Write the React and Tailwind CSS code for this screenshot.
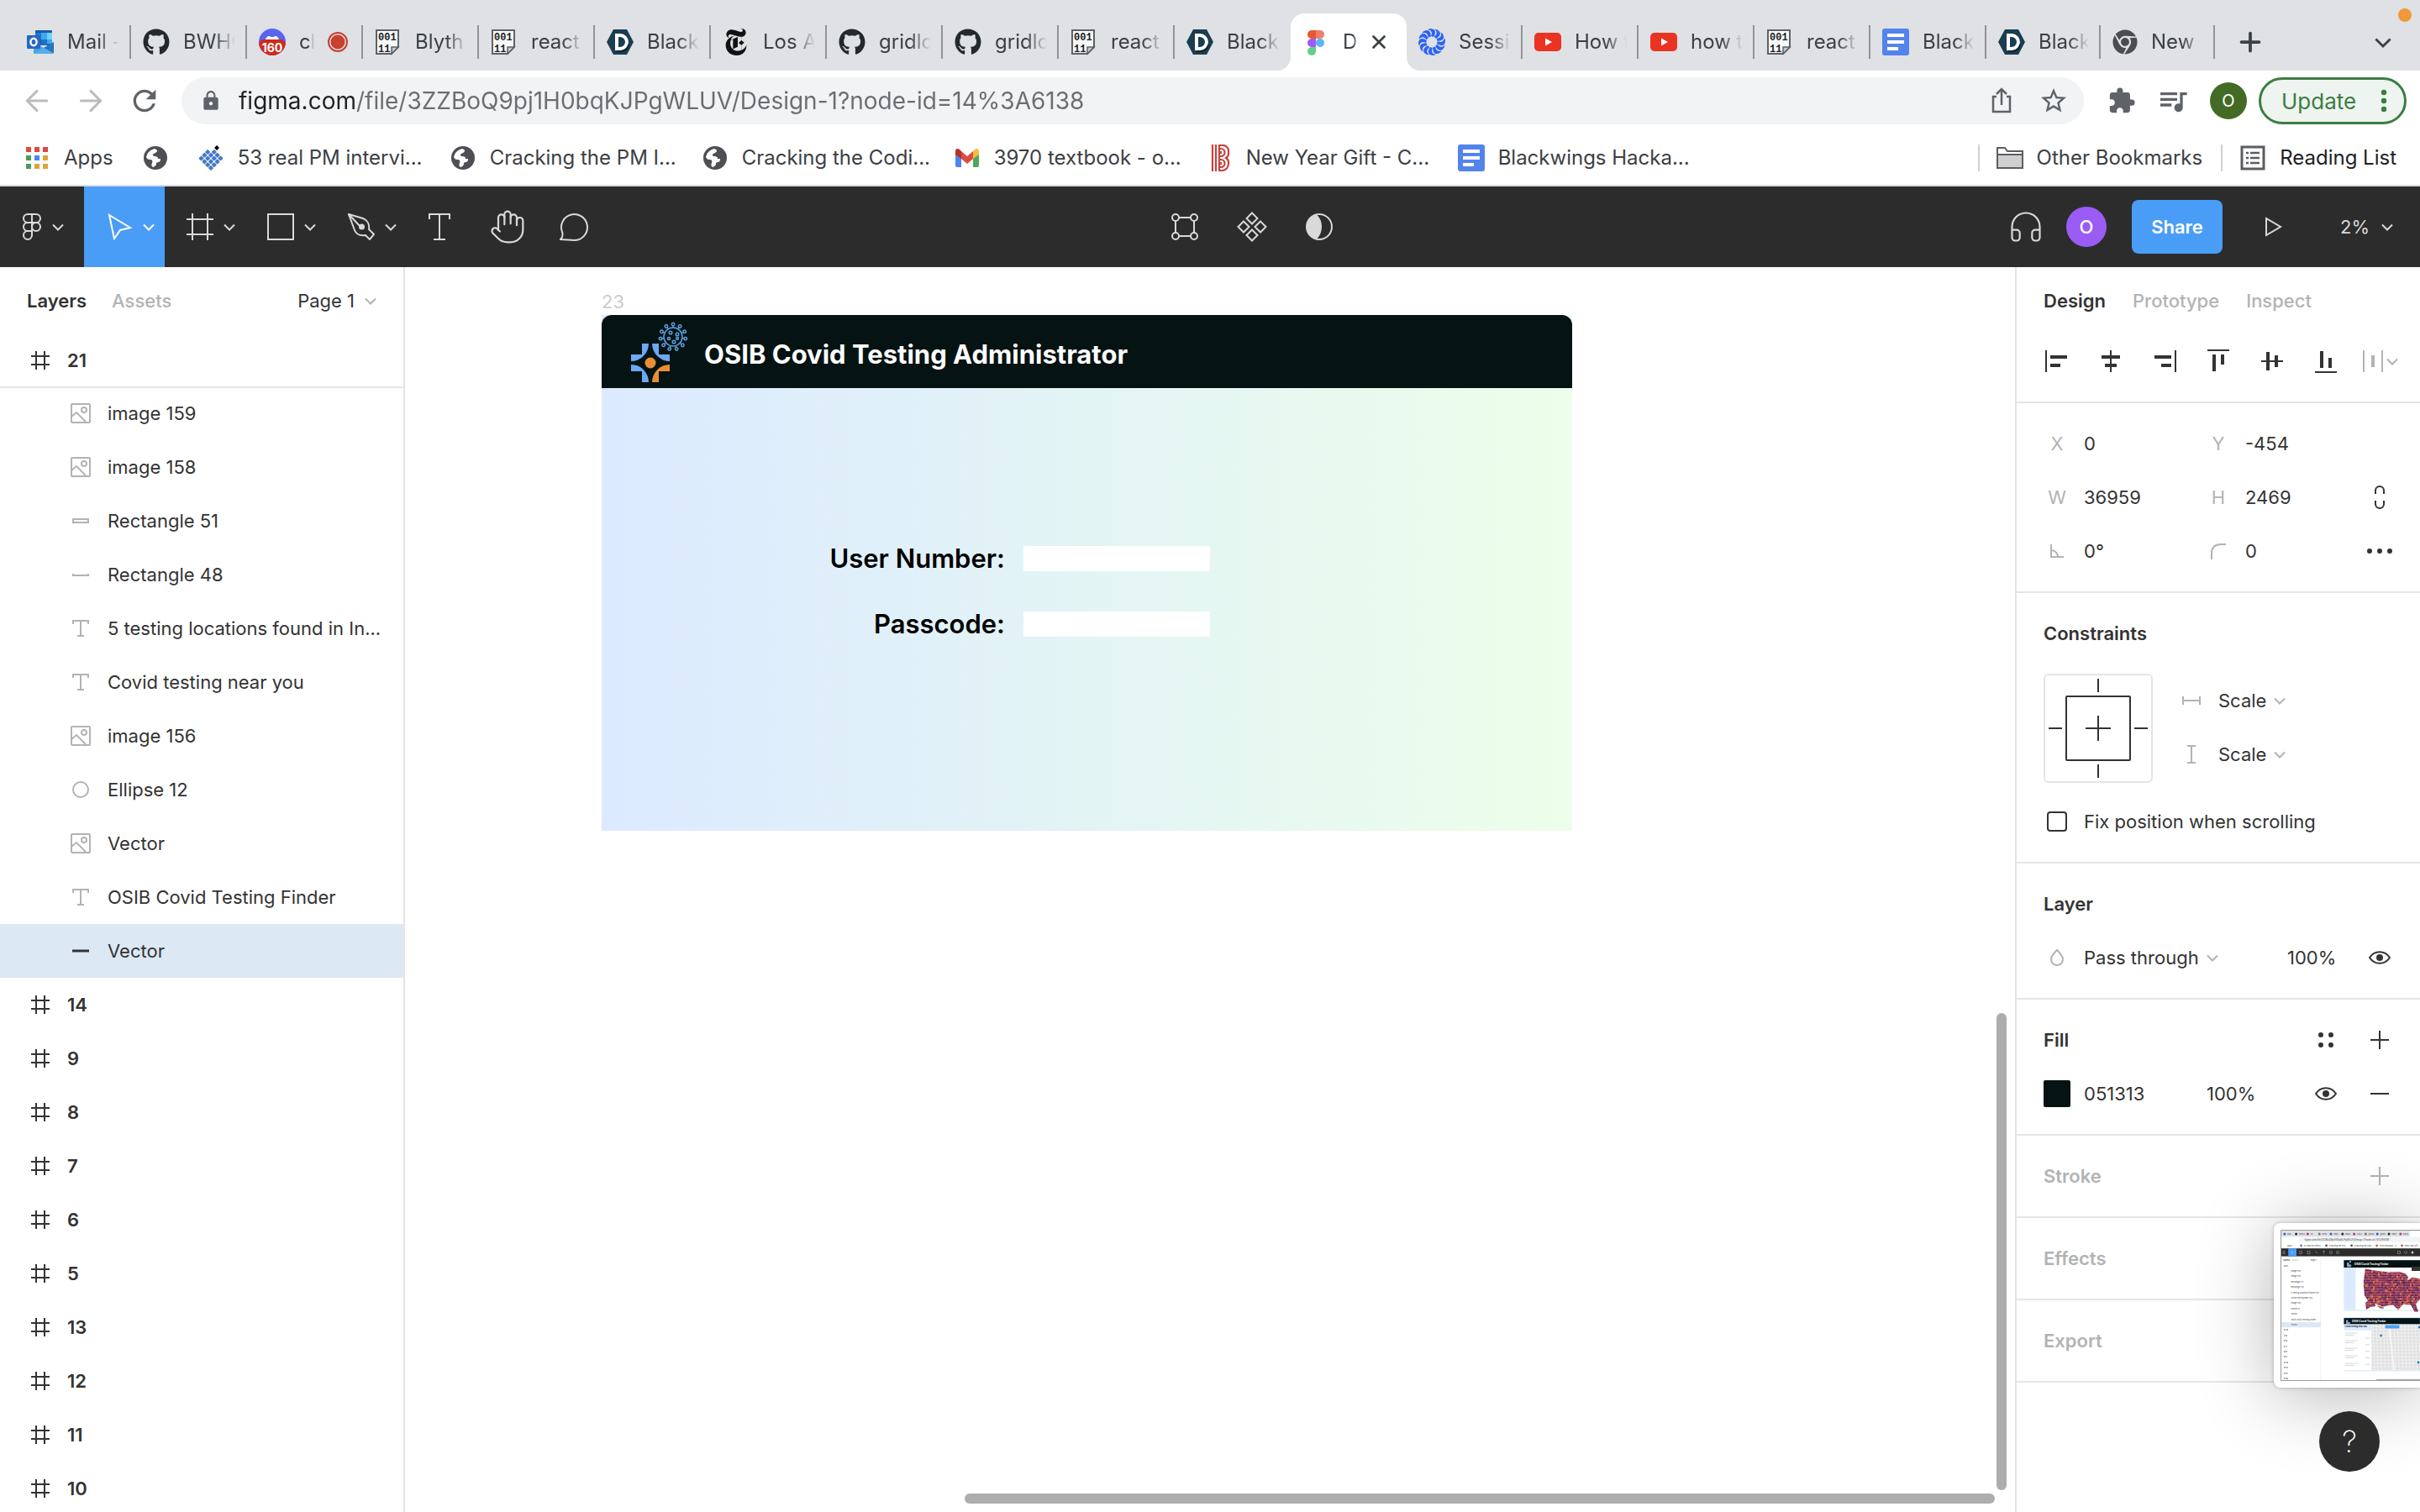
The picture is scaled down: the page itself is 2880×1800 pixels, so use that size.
import { useState } from 'react';
import { ArrowLeft, ArrowRight, Hand, Headphones, Plus, X } from 'lucide-react';
import { FaChrome, FaGithub } from 'react-icons/fa';
import { MdExtension, MdLock, MdQueueMusic, MdRefresh, MdStarBorder } from 'react-icons/md';
import { SiNewyorktimes } from 'react-icons/si';

const GRAY = '#b3b3b3';
const DARK = '#333333';

/* ---------- favicons ---------- */

function OutlookIcon() {
    return (
        <svg width="32" height="32" viewBox="0 0 32 32" className="shrink-0">
            <rect x="10" y="2" width="20" height="18" rx="1" fill="#1a5aa8" />
            <rect x="10" y="5" width="7" height="8" fill="#1e78d0" />
            <rect x="17" y="5" width="7" height="8" fill="#3ea9ee" />
            <rect x="24" y="5" width="6" height="8" fill="#6fd3fa" />
            <rect x="17" y="13" width="7" height="7" fill="#1f6fc4" />
            <rect x="24" y="13" width="6" height="5" fill="#3ea9ee" />
            <path d="M8 16l12 7 12-7v13a1 1 0 01-1 1H9a1 1 0 01-1-1z" fill="#4ba0e4" />
            <path d="M32 16v13L20 23z" fill="#2c73bd" />
            <path d="M8 30l12-7 12 7z" fill="#54aeee" />
            <rect x="0" y="8" width="16" height="16" rx="1" fill="#2567c4" />
            <ellipse cx="8" cy="16" rx="3.6" ry="4.2" fill="none" stroke="#fff" strokeWidth="2.4" />
        </svg>
    );
}

function DiscordIcon() {
    return (
        <span className="relative h-8 w-8 shrink-0 overflow-hidden rounded-full bg-[#5865f2]">
            <svg width="32" height="32" viewBox="0 0 32 32">
                <path d="M8 14c0-3 2-5 5-5l1 1h4l1-1c3 0 5 2 5 5z" fill="#fff" />
            </svg>
            <span className="absolute inset-x-0 bottom-0 flex h-[19px] items-center justify-center rounded-md bg-[#cf2a1d] text-sm font-bold text-white">160</span>
        </span>
    );
}

function BinaryIcon() {
    return (
        <svg width="32" height="32" viewBox="0 0 32 32" className="shrink-0">
            <path d="M2 2h26v20l-8 8H2z" fill="#f7f8f9" stroke="#5d6267" strokeWidth="2" />
            <path d="M20 30v-8h8z" fill="#c4c8cc" stroke="#5d6267" strokeWidth="1.5" />
            <text x="4" y="14" fontSize="12" fontWeight="700" fontFamily="Liberation Mono, monospace" fill="#222">001</text>
            <text x="4" y="28" fontSize="12" fontWeight="700" fontFamily="Liberation Mono, monospace" fill="#222">11</text>
        </svg>
    );
}

function HexDIcon() {
    return (
        <svg width="32" height="32" viewBox="0 0 32 32" className="shrink-0">
            <path d="M8 1h16l8 15-8 15H8L0 16z" fill="#1b3d51" />
            <path d="M12 8h4a8 8 0 010 16h-4z" fill="none" stroke="#fff" strokeWidth="4" />
            <path d="M12 27h6a10 10 0 008-8" fill="none" stroke="#0d1f2b" strokeWidth="1.5" />
        </svg>
    );
}

function FigmaIcon() {
    return (
        <svg width="32" height="32" viewBox="0 0 32 32" className="shrink-0">
            <path d="M11 2h5v10h-5a5 5 0 010-10z" fill="#e25a2d" />
            <path d="M16 2h5a5 5 0 010 10h-5z" fill="#ef7f6d" />
            <path d="M11 12h5v10h-5a5 5 0 010-10z" fill="#a259f7" />
            <circle cx="21" cy="17" r="5" fill="#57b6f9" />
            <path d="M11 22h5v5a5 5 0 11-5-5z" fill="#62d08b" />
        </svg>
    );
}

function PetalsIcon() {
    const petals = Array.from({ length: 12 }, (_, i) => i * 30);
    return (
        <svg width="32" height="32" viewBox="0 0 32 32" className="shrink-0">
            {petals.map(angle => (
                <path key={angle} d="M14 0c6 0 8 4 4 10l-3-1c2-4 1-7-4-8z" fill="#2d64f5" transform={`rotate(${angle} 16 16)`} />
            ))}
        </svg>
    );
}

function YoutubeIcon() {
    return (
        <svg width="32" height="32" viewBox="0 0 32 32" className="shrink-0">
            <rect x="0" y="5" width="32" height="22" rx="5" fill="#ea3323" />
            <path d="M13 11.500l8 4.500-8 4.500z" fill="#fff" />
        </svg>
    );
}

function DocsIcon() {
    return (
        <svg width="32" height="32" viewBox="0 0 32 32" className="shrink-0">
            <rect width="32" height="32" rx="3" fill="#5383ec" />
            <path d="M6 8h20M6 16h20M6 24h13" stroke="#fff" strokeWidth="4" />
        </svg>
    );
}

function GlobeIcon() {
    return (
        <svg width="32" height="32" viewBox="0 0 32 32" className="shrink-0">
            <circle cx="16" cy="16" r="14" fill="#4d4f54" />
            <path d="M5 15l1-3c2-4 5-6 9-7l2 1c2 1 1 3-1 4l-2 1c-2 1-1 3 1 3 3 0 4 1 4 3h3c0 3-1 4-3 4l-2 1c0 3-1 4-4 5-2-1-2-3-1-5 1-3 0-4-3-4-2 0-3-1-4-3z" fill="#fff" />
        </svg>
    );
}

function AppsIcon() {
    const colors = ['#dd4b3e', '#dd4b3e', '#dd4b3e', '#4f9a5b', '#4886ed', '#e2a336', '#4f9a5b', '#e2a336', '#e2a336'];
    return (
        <svg width="32" height="32" viewBox="0 0 32 32" className="shrink-0">
            {colors.map((c, i) => (
                <rect key={i} x={3 + (i % 3) * 10} y={3 + Math.floor(i / 3) * 10} width="6" height="6" fill={c} />
            ))}
        </svg>
    );
}

function DiamondGridIcon() {
    const cells = [];
    for (let r = 0; r < 4; r++) {
        for (let c = 0; c < 4; c++) {
            if (r === 0 && c === 0) continue;
            cells.push(<rect key={`${r}-${c}`} x={5 + c * 5.400} y={5 + r * 5.400} width="4.600" height="4.600" rx="1" fill="#4478c8" />);
        }
    }
    return (
        <svg width="32" height="32" viewBox="0 0 32 32" className="shrink-0">
            <g transform="rotate(45 16 16) translate(1 1)">{cells}</g>
            <path d="M23 1l3 3-3 3-3-3z" fill="#000" />
        </svg>
    );
}

function GmailIcon() {
    return (
        <svg width="32" height="32" viewBox="0 0 32 32" className="shrink-0">
            <path d="M2 11l7 5v11H4a2 2 0 01-2-2z" fill="#4a86ee" />
            <path d="M23 16l7-5v14a2 2 0 01-2 2h-5z" fill="#52a55b" />
            <path d="M9 8l7 6 7-6v9l-7 6-7-6z" fill="#db4c3f" />
            <path d="M2 8c0-3 3-4 5-2l2 2v9l-7-5z" fill="#b53127" />
            <path d="M30 8c0-3-3-4-5-2l-2 2v9l7-5z" fill="#f2be42" />
        </svg>
    );
}

function StripedBIcon() {
    return (
        <svg width="32" height="32" viewBox="0 0 32 32" className="shrink-0" fill="none" stroke="#c9423f" strokeWidth="2.2">
            <path d="M8 0v32M12 0v32M16 0v32" />
            <path d="M16 1h3a7 7 0 018 8 7 7 0 01-3 7 7 7 0 013 7 8 8 0 01-8 8h-3" />
            <path d="M16 5h2a4 4 0 010 9h-2M16 18h2a4 4 0 010 9h-2" />
            <path d="M17 9.500h2M17 22.500h2" strokeWidth="3" />
        </svg>
    );
}

/* ---------- shared bits ---------- */

function Chevron({ color = GRAY, size = 14 }) {
    return (
        <svg width={size} height={size} viewBox="0 0 14 14" className="pointer-events-none shrink-0">
            <path d="M1 4.500l6 6 6-6" fill="none" stroke={color} strokeWidth="2" />
        </svg>
    );
}

function Icon({ children, color = DARK, size = 32, box = 32, fill = 'none' }) {
    return (
        <svg width={size} height={size} viewBox={`0 0 ${box} ${box}`} fill={fill} stroke={color} strokeWidth="2" className="shrink-0">
            {children}
        </svg>
    );
}

/* ---------- browser ---------- */

const tabs = [
    { title: 'Mail -', icon: <OutlookIcon /> },
    { title: 'BWHC', icon: <FaGithub size={32} className="shrink-0 text-[#24292e]" /> },
    { title: 'ch', icon: <DiscordIcon />, recording: true },
    { title: 'Blyth', icon: <BinaryIcon /> },
    { title: 'react', icon: <BinaryIcon /> },
    { title: 'Black', icon: <HexDIcon /> },
    { title: 'Los A', icon: <SiNewyorktimes size={32} className="shrink-0 text-[#111]" /> },
    { title: 'gridlo', icon: <FaGithub size={32} className="shrink-0 text-[#24292e]" /> },
    { title: 'gridlo', icon: <FaGithub size={32} className="shrink-0 text-[#24292e]" /> },
    { title: 'react', icon: <BinaryIcon /> },
    { title: 'Black', icon: <HexDIcon />, last: true },
    { title: 'De', icon: <FigmaIcon />, active: true },
    { title: 'Sessi', icon: <PetalsIcon /> },
    { title: 'How t', icon: <YoutubeIcon /> },
    { title: 'how t', icon: <YoutubeIcon /> },
    { title: 'react', icon: <BinaryIcon /> },
    { title: 'Black', icon: <DocsIcon /> },
    { title: 'Black', icon: <HexDIcon />, narrow: true },
    { title: 'New', icon: <FaChrome size={30} className="shrink-0 text-[#4a4c50]" />, narrow: true },
];

function TabTitle({ children }) {
    return (
        <span className="min-w-0 flex-1 overflow-hidden text-left whitespace-nowrap [mask-image:linear-gradient(to_right,black_60%,transparent)]">
            {children}
        </span>
    );
}

function BrowserTab({ tab }) {
    if (tab.active) {
        return (
            <div className="relative flex h-[68px] w-[138px] shrink-0 items-center rounded-t-2xl bg-white pr-5 pl-[14px]">
                <svg width="16" height="16" className="absolute bottom-0 -left-4">
                    <path d="M16 0v16H0A16 16 0 0016 0z" fill="#fff" />
                </svg>
                <svg width="16" height="16" className="absolute -right-4 bottom-0">
                    <path d="M0 0v16h16A16 16 0 010 0z" fill="#fff" />
                </svg>
                {tab.icon}
                <button className="ml-4 flex w-5 overflow-hidden">
                    <TabTitle>{tab.title}</TabTitle>
                </button>
                <button className="ml-auto" aria-label="Close tab">
                    <X size={26} strokeWidth={2.5} />
                </button>
            </div>
        );
    }
    return (
        <div className={`flex h-[68px] shrink-0 items-center ${tab.narrow ? 'w-[136px]' : 'w-[138px]'}`}>
            <button className={`flex h-10 w-full items-center gap-4 pr-3 pl-[14px] ${tab.last ? '' : 'border-r-2 border-[#919397]'}`}>
                {tab.icon}
                <TabTitle>{tab.title}</TabTitle>
                {tab.recording && (
                    <svg width="24" height="24" viewBox="0 0 24 24" className="mr-1 shrink-0">
                        <circle cx="12" cy="12" r="11" fill="none" stroke="#c8402f" strokeWidth="2" />
                        <circle cx="12" cy="12" r="8.500" fill="#c8402f" />
                    </svg>
                )}
            </button>
        </div>
    );
}

function TabStrip() {
    return (
        <div className="relative flex h-[84px] items-end bg-[#dfe1e5] pl-[18px] text-2xl">
            {tabs.map((tab, i) => (
                <BrowserTab key={i} tab={tab} />
            ))}
            <button className="ml-6 flex h-[68px] items-center" aria-label="New tab">
                <Plus size={36} strokeWidth={2.5} />
            </button>
            <button className="mr-[34px] ml-auto flex h-[68px] items-center" aria-label="Search tabs">
                <Chevron color="#3c4043" size={20} />
            </button>
            <span className="absolute top-2.5 right-2.5 h-4 w-4 rounded-full bg-[#ef9a38]" />
        </div>
    );
}

function AddressBar() {
    return (
        <div className="flex h-[72px] items-center pr-4 pl-6 text-[#5f6368]">
            <button aria-label="Back"><ArrowLeft size={40} strokeWidth={1.8} className="text-[#babcbe]" /></button>
            <button aria-label="Forward" className="ml-6"><ArrowRight size={40} strokeWidth={1.8} className="text-[#babcbe]" /></button>
            <button aria-label="Reload" className="ml-6"><MdRefresh size={40} /></button>
            <div className="ml-6 flex h-14 flex-1 items-center rounded-full bg-[#f1f3f4] pr-[18px] pl-[22px]">
                <MdLock size={26} className="shrink-0" />
                <input
                    aria-label="Address"
                    defaultValue="figma.com/file/3ZZBoQ9pj1H0bqKJPgWLUV/Design-1?node-id=14%3A6138"
                    className="ml-5 min-w-0 flex-1 bg-[linear-gradient(to_right,#202124_138px,#6a6d71_138px)] bg-clip-text text-[28px] text-transparent outline-none"
                />
                <button aria-label="Share this page">
                    <Icon color="#5f6368">
                        <path d="M10 11H6v18h20V11h-4M16 21V3M10 8l6-6 6 6" strokeWidth="2.500" />
                    </Icon>
                </button>
                <button aria-label="Bookmark this page" className="ml-7"><MdStarBorder size={36} /></button>
            </div>
            <button aria-label="Extensions" className="ml-7"><MdExtension size={34} /></button>
            <button aria-label="Media" className="ml-6"><MdQueueMusic size={40} /></button>
            <button className="ml-6 h-11 w-11 rounded-full bg-[#446b26] text-xl text-white">O</button>
            <button className="ml-[14px] flex h-14 w-[176px] items-center justify-between rounded-full border-3 border-[#3c7d43] bg-[#eef4f0] pr-5 pl-6 text-[26px] text-[#3c7d43]">
                Update
                <svg width="8" height="28" viewBox="0 0 8 28" fill="#3c7d43">
                    <circle cx="4" cy="4" r="3.200" />
                    <circle cx="4" cy="14" r="3.200" />
                    <circle cx="4" cy="24" r="3.200" />
                </svg>
            </button>
        </div>
    );
}

const bookmarks = [
    { title: '53 real PM intervi...', icon: <DiamondGridIcon /> },
    { title: 'Cracking the PM I...', icon: <GlobeIcon /> },
    { title: 'Cracking the Codi...', icon: <GlobeIcon /> },
    { title: '3970 textbook - o...', icon: <GmailIcon /> },
    { title: 'New Year Gift - C...', icon: <StripedBIcon /> },
    { title: 'Blackwings Hacka...', icon: <DocsIcon /> },
];

function BookmarksBar() {
    return (
        <nav className="flex h-16 items-center pr-7 pl-7 text-2xl whitespace-nowrap">
            <a href="#apps" className="flex items-center gap-4"><AppsIcon />Apps</a>
            <a href="#site" className="mr-[34px] ml-[34px]" aria-label="Bookmark"><GlobeIcon /></a>
            {bookmarks.map(b => (
                <a key={b.title} href="#bookmark" className="flex w-[300px] shrink-0 items-center gap-4">
                    {b.icon}
                    {b.title}
                </a>
            ))}
            <div className="ml-auto flex items-center">
                <span className="mr-5 h-8 w-0.5 bg-[#cfd1d4]" />
                <a href="#other" className="flex items-center gap-4">
                    <svg width="32" height="32" viewBox="0 0 32 32" fill="#cfcfcf" stroke="#5b5d61" strokeWidth="2">
                        <path d="M1 28V4h9l3 4h18v20z" fill="#fff" />
                        <path d="M1 12h30v16H1z" />
                    </svg>
                    Other Bookmarks
                </a>
                <span className="mr-5 ml-[22px] h-8 w-0.5 bg-[#cfd1d4]" />
                <a href="#reading" className="flex items-center gap-4 text-[#202124]">
                    <Icon color="#5b5d61">
                        <path d="M3 3h26v26H3z" strokeWidth="3" />
                        <path d="M13 10h11M13 16h11M13 22h11M8 10h3M8 16h3M8 22h3" strokeWidth="2.500" />
                    </Icon>
                    Reading List
                </a>
            </div>
        </nav>
    );
}

/* ---------- editor toolbar ---------- */

const tools = [
    {
        name: 'Frame',
        icon: <path d="M7 0v32M25 0v32M0 7h32M0 25h32" />,
    },
    {
        name: 'Rectangle',
        icon: <rect x="1" y="1" width="30" height="30" />,
    },
    {
        name: 'Pen',
        icon: (
            <>
                <path d="M1 1l17 5c5 2 8 7 7 13l6 6-5 6-5-5c-6 1-11-1-13-6z" />
                <path d="M1 1l14 15" />
                <circle cx="16.500" cy="16" r="2.500" fill="#d9d9d9" />
            </>
        ),
    },
];

function EditorToolbar() {
    return (
        <div className="flex h-24 items-center bg-[#2c2c2c] text-[#d9d9d9]">
            <button className="flex h-full w-[100px] items-center gap-2 pl-[22px]" aria-label="Main menu">
                <Icon color="#d9d9d9">
                    <path d="M16 1H11a5 5 0 000 10h5zM16 1h5a5 5 0 010 10h-5zM16 11h-5a5 5 0 000 10h5zM16 21h-5a5 5 0 105 5z" />
                    <circle cx="21" cy="16" r="5" />
                </Icon>
                <Chevron color="#d9d9d9" />
            </button>
            <button className="flex h-full w-24 items-center gap-3 bg-[#4a9df6] pl-[26px]" aria-label="Move">
                <Icon color="#fff">
                    <path d="M4 2l25 15-12 3-7 10z" />
                </Icon>
                <Chevron color="#fff" />
            </button>
            {tools.map(tool => (
                <button key={tool.name} className="flex h-full w-24 items-center gap-3 pl-[26px]" aria-label={tool.name}>
                    <Icon color="#d9d9d9">{tool.icon}</Icon>
                    <Chevron color="#d9d9d9" />
                </button>
            ))}
            <button className="flex h-full w-20 items-center justify-center" aria-label="Text">
                <Icon color="#d9d9d9">
                    <path d="M3 7V1h24v6M15 1v30M8 31h14" />
                </Icon>
            </button>
            <button className="flex h-full w-20 items-center justify-center" aria-label="Hand tool">
                <Hand size={44} strokeWidth={1.2} />
            </button>
            <button className="flex h-full w-20 items-center justify-center" aria-label="Comment">
                <Icon color="#d9d9d9" size={36} box={36}>
                    <path d="M1 33c3-3 3-6 2-9A15.500 15.500 0 1117 34c-5 0-10-1-16-1z" />
                </Icon>
            </button>
            <div className="flex h-full flex-1 items-center justify-center gap-[46px]">
                <button aria-label="Edit object">
                    <Icon color="#d9d9d9">
                        <circle cx="5" cy="5" r="4" />
                        <circle cx="27" cy="5" r="4" />
                        <circle cx="5" cy="27" r="4" />
                        <circle cx="27" cy="27" r="4" />
                        <path d="M9 5h14M9 27h14M5 9v14M27 9v14" />
                    </Icon>
                </button>
                <button aria-label="Create component">
                    <Icon color="#d9d9d9" box={36} size={36}>
                        <path d="M18 1.500l6.500 6.500-6.500 6.500L11.500 8zM18 21.500l6.500 6.500-6.500 6.500-6.500-6.500zM8 11.500l6.500 6.500L8 24.500 1.500 18zM28 11.500l6.500 6.500-6.500 6.500-6.500-6.500z" />
                    </Icon>
                </button>
                <button aria-label="Use as mask">
                    <Icon color="#d9d9d9">
                        <circle cx="16" cy="16" r="15" />
                        <path d="M12 2a15 15 0 000 28c8-7 8-21 0-28z" fill="#d9d9d9" />
                    </Icon>
                </button>
            </div>
            <div className="flex h-full w-[624px] items-center justify-end pr-8">
                <button aria-label="Start conversation"><Headphones size={44} strokeWidth={1.2} /></button>
                <button className="ml-[26px] h-12 w-12 rounded-full bg-[#9a5cf5] text-[22px] font-medium text-white">O</button>
                <button className="ml-[30px] h-16 w-[108px] rounded-lg bg-[#4a9df6] text-[22px] font-semibold text-white">Share</button>
                <button aria-label="Present" className="ml-11">
                    <Icon color="#d9d9d9">
                        <path d="M8 6v20l17-10z" />
                    </Icon>
                </button>
                <button className="ml-16 flex items-center gap-[14px] text-[22px]">
                    2%
                    <Chevron color="#d9d9d9" />
                </button>
            </div>
        </div>
    );
}

/* ---------- layers panel ---------- */

const layerIcons = {
    image: (
        <>
            <rect x="1" y="1" width="22" height="22" rx="1" />
            <circle cx="16" cy="8" r="3" />
            <path d="M1 16l6-5 11 11" />
        </>
    ),
    bar: <rect x="3" y="10" width="18" height="4" />,
    line: <path d="M3 11v2h18v-2" />,
    text: <path d="M3 7V3h18v4M12 3v18M8 21h8" />,
    ellipse: <circle cx="12" cy="12" r="9" />,
    vector: <path d="M2 12h20" strokeWidth="3" />,
};

const layers = [
    { name: 'image 159', icon: 'image' },
    { name: 'image 158', icon: 'image' },
    { name: 'Rectangle 51', icon: 'bar' },
    { name: 'Rectangle 48', icon: 'line' },
    { name: '5 testing locations found in In...', icon: 'text' },
    { name: 'Covid testing near you', icon: 'text' },
    { name: 'image 156', icon: 'image' },
    { name: 'Ellipse 12', icon: 'ellipse' },
    { name: 'Vector', icon: 'image' },
    { name: 'OSIB Covid Testing Finder', icon: 'text' },
    { name: 'Vector', icon: 'vector' },
];

const frames = ['14', '9', '8', '7', '6', '5', '13', '12', '11', '10'];

function FrameRow({ name, divider }) {
    return (
        <li className={`flex h-16 items-center gap-5 pl-9 font-semibold ${divider ? '-mb-0.5 border-b-2 border-[#e5e5e5]' : ''}`}>
            <Icon size={24} box={24}>
                <path d="M7 1v22M17 1v22M1 7h22M1 17h22" />
            </Icon>
            {name}
        </li>
    );
}

function LayersPanel() {
    const [selected, setSelected] = useState(10);

    return (
        <aside className="w-[482px] shrink-0 overflow-hidden border-r-2 border-[#e5e5e5] bg-white">
            <div className="flex h-20 items-center pr-8 pl-8">
                <button className="font-semibold">Layers</button>
                <button className="ml-[30px] font-medium text-[#b3b3b3]">Assets</button>
                <button className="ml-auto flex items-center gap-3">
                    Page 1
                    <Chevron />
                </button>
            </div>
            <ul>
                <FrameRow name="21" divider />
                {layers.map((layer, i) => (
                    <li
                        key={i}
                        onClick={() => setSelected(i)}
                        className={`flex h-16 items-center gap-5 pl-[84px] whitespace-nowrap ${i === selected ? 'bg-[#dde8f5]' : ''}`}
                    >
                        <Icon size={24} box={24} color={i === 10 ? DARK : GRAY}>{layerIcons[layer.icon]}</Icon>
                        {layer.name}
                    </li>
                ))}
                {frames.map(name => (
                    <FrameRow key={name} name={name} />
                ))}
            </ul>
        </aside>
    );
}

/* ---------- canvas ---------- */

function OsibLogo() {
    const spikes = Array.from({ length: 11 }, (_, i) => (i * 360) / 11);
    return (
        <svg width="72" height="76" viewBox="0 0 72 76" className="shrink-0">
            <path d="M16 28H24A21 21 0 013 49V41H16z" fill="#6ba9f5" />
            <path d="M36 28H28A21 21 0 0049 49V41H36z" fill="#6ba9f5" />
            <path d="M16 74H24A21 21 0 003 53V61H16z" fill="#6ba9f5" />
            <path d="M36 74H28A21 21 0 0149 53V61H36z" fill="#e88e36" />
            <circle cx="26" cy="51" r="6.500" fill="#e88e36" />
            <g fill="none" stroke="#5aa0e0" strokeWidth="1.500">
                <circle cx="53" cy="20" r="11" />
                {spikes.map(a => (
                    <g key={a} transform={`rotate(${a} 53 20)`}>
                        <path d="M53 9V7" />
                        <circle cx="53" cy="5" r="1.700" />
                    </g>
                ))}
                <circle cx="50" cy="15" r="1.800" />
                <circle cx="58" cy="17" r="1.800" />
                <circle cx="48" cy="22" r="1.500" />
                <circle cx="54" cy="26" r="1.800" />
                <circle cx="58" cy="22" r="1.400" />
            </g>
        </svg>
    );
}

function Canvas() {
    return (
        <main className="relative min-w-0 flex-1 overflow-hidden bg-white pt-[25px] pl-[234px]">
            <div className="h-8 text-[22px] leading-8 text-[#cccccc]">23</div>
            <section className="h-[614px] w-[1155px] bg-linear-to-r from-[#dceaff] via-[#e3f4f5] to-[#ecffea] text-black">
                <header className="flex h-[87px] items-center gap-[18px] rounded-t-xl bg-[#051313] pl-8">
                    <OsibLogo />
                    <h1 className="pt-2 text-[31px] font-bold text-white">OSIB Covid Testing Administrator</h1>
                </header>
                <form className="grid auto-rows-[78px] grid-cols-[480px_222px] items-center gap-x-[22px] pt-[164px]">
                    <label htmlFor="user-number" className="text-right text-[31px] font-semibold">User Number:</label>
                    <input id="user-number" className="h-[30px] bg-white" />
                    <label htmlFor="passcode" className="text-right text-[31px] font-semibold">Passcode:</label>
                    <input id="passcode" className="h-[30px] bg-white" />
                </form>
            </section>
            <div className="absolute right-2.5 bottom-[26px] h-[568px] w-3 rounded-full bg-[#adadad]" />
            <div className="absolute right-6 bottom-2.5 h-3 w-[1226px] rounded-full bg-[#adadad]" />
        </main>
    );
}

/* ---------- design panel ---------- */

function Section({ title, muted, actions, children }) {
    return (
        <section className="border-b-2 border-[#e5e5e5] px-8 py-4">
            {title && (
                <div className="flex h-16 items-center justify-between">
                    <h2 className={`font-semibold ${muted ? 'text-[#b3b3b3]' : ''}`}>{title}</h2>
                    <div className="flex gap-8">{actions}</div>
                </div>
            )}
            {children}
        </section>
    );
}

function Field({ label, name, value }) {
    return (
        <label className="flex h-16 w-48 items-center gap-4">
            <span className="flex w-8 justify-center text-[#b3b3b3]">{label}</span>
            <input aria-label={name} defaultValue={value} className="w-28 outline-none" />
        </label>
    );
}

function PlusIcon({ color }) {
    return (
        <Icon color={color}>
            <path d="M16 5v22M5 16h22" />
        </Icon>
    );
}

function EyeIcon() {
    return (
        <Icon>
            <path d="M4 16c6-9 18-9 24 0-6 9-18 9-24 0z" />
            <circle cx="16" cy="16" r="4" fill={DARK} stroke="none" />
        </Icon>
    );
}

// thin guide line first, then the two thick bars
const alignments = [
    { name: 'Align left', line: 'M3 3v26', bars: 'M8 11h20M8 21h12' },
    { name: 'Align horizontal centers', line: 'M16 3v26', bars: 'M5 11h22M9 21h14' },
    { name: 'Align right', line: 'M29 3v26', bars: 'M4 11h20M12 21h12' },
    { name: 'Align top', line: 'M3 3h26', bars: 'M11 8v20M21 8v12' },
    { name: 'Align vertical centers', line: 'M3 16h26', bars: 'M11 5v22M21 9v14' },
    { name: 'Align bottom', line: 'M3 29h26', bars: 'M11 4v20M21 12v12' },
];

function ScaleSelect({ name, icon }) {
    return (
        <div className="flex h-16 items-center">
            <Icon color={GRAY}>{icon}</Icon>
            <select aria-label={name} className="ml-4 w-[66px] appearance-none outline-none">
                <option>Scale</option>
            </select>
            <Chevron />
        </div>
    );
}

function DesignPanel() {
    return (
        <aside className="w-[482px] shrink-0 border-l-2 border-[#e5e5e5] bg-white">
            <div className="flex h-20 items-center gap-8 pl-8 font-medium text-[#b3b3b3]">
                <button className="font-semibold text-[#333333]">Design</button>
                <button>Prototype</button>
                <button>Inspect</button>
            </div>
            <div className="flex h-[82px] gap-8 border-b-2 border-[#e5e5e5] pt-4 pl-8">
                {alignments.map(a => (
                    <button key={a.name} aria-label={a.name} className="h-8">
                        <Icon>
                            <path d={a.line} />
                            <path d={a.bars} strokeWidth="4" />
                        </Icon>
                    </button>
                ))}
                <button aria-label="Distribute" className="-ml-2 flex h-8 items-center">
                    <Icon color={GRAY}>
                        <path d="M5 3v26M27 3v26" />
                        <path d="M16 9v14" strokeWidth="4" />
                    </Icon>
                    <Chevron />
                </button>
            </div>

            <Section>
                <div className="flex">
                    <Field label="X" name="X" value="0" />
                    <Field label="Y" name="Y" value="-454" />
                </div>
                <div className="flex items-center">
                    <Field label="W" name="Width" value="36959" />
                    <Field label="H" name="Height" value="2469" />
                    <button aria-label="Constrain proportions">
                        <Icon>
                            <path d="M11 12V8a5 5 0 0110 0v4M11 20v4a5 5 0 0010 0v-4" />
                        </Icon>
                    </button>
                </div>
                <div className="flex items-center">
                    <Field
                        name="Rotation"
                        value="0°"
                        label={<Icon color={GRAY}><path d="M9 8v15h15M9 15a8 8 0 018 8" /></Icon>}
                    />
                    <Field
                        name="Corner radius"
                        value="0"
                        label={<Icon color={GRAY}><path d="M8 26v-7c0-7 4-11 11-11h6" /></Icon>}
                    />
                    <button aria-label="Independent corners">
                        <Icon fill={DARK}>
                            <circle cx="4" cy="16" r="2" />
                            <circle cx="16" cy="16" r="2" />
                            <circle cx="28" cy="16" r="2" />
                        </Icon>
                    </button>
                </div>
            </Section>

            <Section title="Constraints">
                <div className="flex h-40 gap-[30px] pt-4">
                    <div className="flex h-[130px] w-[130px] items-center justify-center rounded-md border-2 border-[#e5e5e5]">
                        <Icon size={120} box={120}>
                            <path d="M60 1v16M60 103v16M1 60h16M103 60h16M60 45v30M45 60h30" />
                            <rect x="22" y="22" width="76" height="76" rx="1" />
                        </Icon>
                    </div>
                    <div>
                        <ScaleSelect name="Horizontal constraint" icon={<path d="M6 16h20M6 11v10M26 11v10" />} />
                        <ScaleSelect name="Vertical constraint" icon={<path d="M16 6v20M11 6h10M11 26h10" />} />
                    </div>
                </div>
                <label className="flex h-16 items-center gap-5 pl-1">
                    <input type="checkbox" className="h-6 w-6 appearance-none rounded-sm border-2 border-[#333333]" />
                    Fix position when scrolling
                </label>
            </Section>

            <Section title="Layer">
                <div className="flex h-16 items-center">
                    <Icon color={GRAY}>
                        <path d="M16 7c-4 4-7 7-7 11a7 7 0 0014 0c0-4-3-7-7-11z" />
                    </Icon>
                    <select aria-label="Blend mode" className="ml-4 w-[146px] appearance-none outline-none">
                        <option>Pass through</option>
                    </select>
                    <Chevron />
                    <input aria-label="Layer opacity" defaultValue="100%" className="ml-auto w-[94px] outline-none" />
                    <button aria-label="Toggle layer"><EyeIcon /></button>
                </div>
            </Section>

            <Section
                title="Fill"
                actions={
                    <>
                        <button aria-label="Styles">
                            <Icon fill={DARK}>
                                <circle cx="10" cy="10" r="2" />
                                <circle cx="22" cy="10" r="2" />
                                <circle cx="10" cy="22" r="2" />
                                <circle cx="22" cy="22" r="2" />
                            </Icon>
                        </button>
                        <button aria-label="Add fill"><PlusIcon /></button>
                    </>
                }
            >
                <div className="flex h-16 items-center">
                    <button aria-label="Fill color" className="h-8 w-8 rounded-xs bg-[#051313]" />
                    <input aria-label="Fill hex" defaultValue="051313" className="ml-4 w-[146px] outline-none" />
                    <input aria-label="Fill opacity" defaultValue="100%" className="w-24 outline-none" />
                    <div className="ml-auto flex gap-8">
                        <button aria-label="Toggle fill"><EyeIcon /></button>
                        <button aria-label="Remove fill">
                            <Icon>
                                <path d="M5 16h22" />
                            </Icon>
                        </button>
                    </div>
                </div>
            </Section>

            <Section title="Stroke" muted actions={<button aria-label="Add stroke"><PlusIcon color={GRAY} /></button>} />
            <Section title="Effects" muted />
            <Section title="Export" muted />
        </aside>
    );
}

/* ---------- screenshot preview ---------- */

const heat = ['#4b1742', '#6e1f4e', '#7d2450', '#8c2a4c', '#a8323e', '#b83a38', '#d9602a', '#5c1a49', '#7a2350', '#952b47'];

function Preview() {
    const cells = [];
    for (let r = 0; r < 26; r++) {
        for (let c = 0; c < 36; c++) {
            const n = Math.abs(Math.sin(r * 12.9 + c * 78.2) * 43758) % 1;
            cells.push(<rect key={`${r}-${c}`} x={980 + c * 20} y={455 + r * 20} width="20" height="20" fill={heat[Math.floor(n * 10)]} />);
        }
    }
    const streets = Array.from({ length: 14 }, (_, i) => i);

    return (
        <div className="absolute right-0 bottom-[148px] w-[174px] rounded-l-lg bg-white py-2 pl-2 shadow-[0_8px_90px_rgba(0,0,0,0.3),0_0_4px_rgba(0,0,0,0.25)]">
            <svg width="166" height="180" viewBox="0 0 1660 1800" fontFamily="Inter, sans-serif" fontSize="24" fill="#444">
                <clipPath id="usa">
                    <path d="M1010 462l90 20 180 22 150-2 60 24 30 40-10 40 60-40 90 20v240l-50 60 30 90-40 10-50-90-90-10-60 70-60-60-80 10-40 10-80-30-90-30-50-70-14-160zM1010 870l60-50 50 30 10 60-60 10-50 30zM1140 900l80 20 10 20-40-5z" />
                </clipPath>
                <rect width="1660" height="1800" fill="#fff" />
                <rect width="1660" height="84" fill="#dfe1e5" />
                {tabs.slice(0, 11).map((tab, i) => (
                    <g key={i}>
                        <circle cx={48 + i * 138} cy="50" r="15" fill={['#2567c4', '#24292e', '#b0338a', '#777777'][i % 4]} />
                        <text x={81 + i * 138} y="58">{tab.title}</text>
                    </g>
                ))}
                <rect x="1536" y="16" width="138" height="70" fill="#fff" />
                <rect x="216" y="92" width="1600" height="56" rx="28" fill="#f1f3f4" />
                <text x="285" y="130" fontSize="28">figma.com/file/3ZZBoQ9pj1H0bqKJPgWLUV/Design-1?node-id=14%3A6138</text>
                <text x="77" y="196">Apps</text>
                {bookmarks.slice(0, 5).map((b, i) => (
                    <g key={b.title}>
                        <circle cx={246 + i * 300} cy="188" r="14" fill={['#4478c8', '#4d4f54', '#4d4f54', '#db4c3f', '#c9423f'][i]} />
                        <text x={278 + i * 300} y="196">{b.title}</text>
                    </g>
                ))}
                <rect y="222" width="1660" height="94" fill="#2c2c2c" />
                <rect x="92" y="222" width="98" height="94" fill="#4a9df6" />
                <g fill="none" stroke="#d9d9d9" strokeWidth="4">
                    <path d="M30 254h20v32H30zM130 256l24 14-12 4-8 10zM226 254h28v32h-28zM320 254h30v32h-30zM414 256l26 26M500 256h30M515 256v30" />
                    <circle cx="600" cy="270" r="16" />
                    <circle cx="680" cy="270" r="16" />
                    <path d="M1395 255h30v30h-30zM1490 252l18 18-18 18-18-18z" />
                    <circle cx="1570" cy="270" r="12" fill="#d9d9d9" />
                </g>
                <text x="32" y="365" fontWeight="700">Layers</text>
                <text x="134" y="365" fill="#b3b3b3">Assets</text>
                <text x="356" y="365">Page 1</text>
                <text x="40" y="436" fontWeight="700"># 21</text>
                <rect y="1100" width="480" height="62" fill="#dde8f5" />
                {layers.map((layer, i) => (
                    <text key={i} x="125" y={500 + i * 64}>{layer.name}</text>
                ))}
                {frames.map((name, i) => (
                    <text key={name} x="40" y={1204 + i * 64} fontWeight="700"># {name}</text>
                ))}
                <path d="M478 318v1482" stroke="#e5e5e5" strokeWidth="6" />

                <rect x="754" y="362" width="906" height="88" fill="#051313" />
                <path d="M790 390h26v26h26v26h-52zM820 370h20v20h-20z" fill="#6ba9f5" />
                <circle cx="812" cy="424" r="12" fill="#e88e36" />
                <text x="880" y="418" fontSize="32" fontWeight="700" fill="#fff">OSIB Covid Testing Finder</text>
                <rect x="754" y="450" width="140" height="500" fill="#dceaff" />
                <rect x="754" y="950" width="906" height="20" fill="#e4f5f2" />
                <g clipPath="url(#usa)">{cells}</g>
                <rect x="1560" y="440" width="100" height="50" fill="#333" />

                <rect x="754" y="1050" width="906" height="76" fill="#051313" stroke="#4a9df6" strokeWidth="4" />
                <path d="M780 1076h24v24h24v20h-48z" fill="#6ba9f5" />
                <circle cx="796" cy="1104" r="10" fill="#e88e36" />
                <text x="850" y="1100" fontSize="32" fontWeight="700" fill="#fff">OSIB Covid Testing Finder</text>
                <rect x="754" y="1126" width="330" height="70" fill="#dceaff" />
                <text x="766" y="1162" fontSize="24" fontWeight="700" fill="#111">Covid testing near you</text>
                <rect x="1084" y="1126" width="576" height="552" fill="#e0e0e1" />
                <g stroke="#f6f6f6" strokeWidth="7">
                    {streets.map(i => (
                        <path key={i} d={`M1084 ${1150 + i * 40}h576M${1100 + i * 42} 1126l20 552`} />
                    ))}
                    <path d="M1290 1126l60 552" strokeWidth="20" />
                </g>
                <g stroke="#c9cbd0" strokeWidth="8">
                    {[0, 1, 2, 3, 4].map(i => (
                        <path key={i} d={`M766 ${1230 + i * 90}h150M766 ${1254 + i * 90}h110M1010 ${1290 + i * 78}h50`} />
                    ))}
                </g>
                <rect x="1246" y="1136" width="168" height="40" rx="8" fill="#4a9df6" />
                <circle cx="1196" cy="1260" r="14" fill="#2f7fae" />
                <circle cx="1640" cy="1580" r="14" fill="#2f7fae" />
                <circle cx="1652" cy="1160" r="14" fill="#2f7fae" />
                <rect x="754" y="1672" width="906" height="12" fill="#d5ecf5" />
                <rect x="1140" y="1778" width="520" height="14" fill="#adadad" />
                <path d="M1660 5H5v1790h1655" fill="none" stroke="#9a9a9a" strokeWidth="10" />
            </svg>
        </div>
    );
}

export default function App() {
    return (
        <div className="relative flex h-screen flex-col overflow-hidden bg-white font-[Inter,sans-serif] text-[#3c4043]">
            <TabStrip />
            <AddressBar />
            <BookmarksBar />
            <div className="border-t-2 border-[#dadce0]" />
            <EditorToolbar />
            <div className="flex min-h-0 flex-1 text-[22px] text-[#333333]">
                <LayersPanel />
                <Canvas />
                <DesignPanel />
            </div>
            <Preview />
            <button aria-label="Help" className="absolute right-12 bottom-12 flex h-[72px] w-[72px] items-center justify-center rounded-full bg-[#2c2c2c] text-[36px] font-extralight text-white">
                ?
            </button>
        </div>
    );
}
